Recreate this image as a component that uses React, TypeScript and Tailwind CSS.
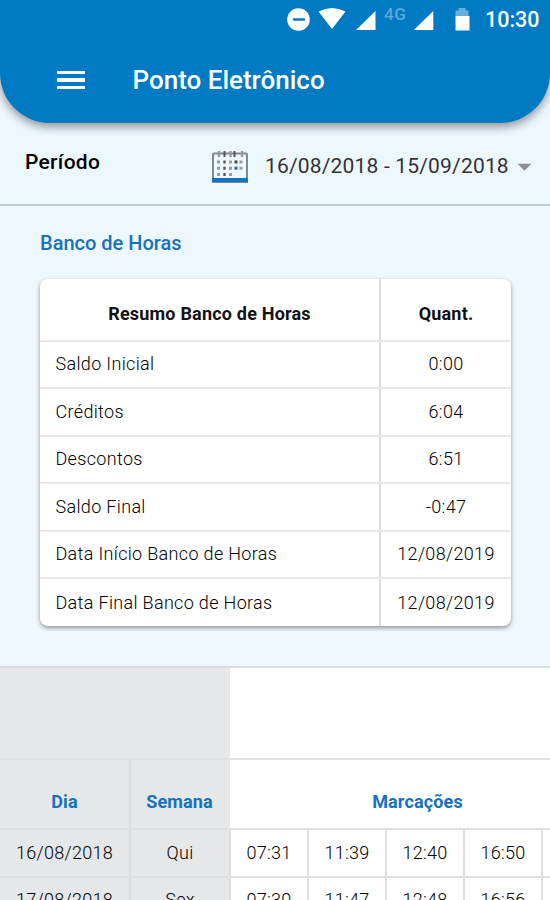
import { MdArrowDropDown } from 'react-icons/md';

const summary = [
  { label: 'Saldo Inicial', value: '0:00' },
  { label: 'Créditos', value: '6:04' },
  { label: 'Descontos', value: '6:51' },
  { label: 'Saldo Final', value: '-0:47' },
  { label: 'Data Início Banco de Horas', value: '12/08/2019' },
  { label: 'Data Final Banco de Horas', value: '12/08/2019' },
];

const days = [
  { date: '16/08/2018', weekday: 'Qui', marks: ['07:31', '11:39', '12:40', '16:50'] },
  { date: '17/08/2018', weekday: 'Sex', marks: ['07:30', '11:47', '12:48', '16:56'] },
];

function StatusBar() {
  return (
    <div className="flex h-10 items-center pl-[286px] text-white">
      <svg className="h-10 w-[190px] shrink-0" viewBox="286 0 190 40" fill="currentColor">
        <circle cx="298.5" cy="19.5" r="11.3" />
        <path d="M294 19.5h10" stroke="#007ac2" strokeWidth="2.4" strokeLinecap="round" />
        <path d="M318.5 11.5Q332 4.5 345.5 11.5L332 29z" />
        <path d="M375.5 11V30H356z" />
        <path d="M433.3 11V30H413.8z" />
        <path d="M455.5 16V10.5h3V8h7v2.5h3V16z" opacity=".4" />
        <path d="M455.5 16h14v14.5h-14z" />
        <text x="384" y="20" fontSize="17" fontWeight="500" letterSpacing="0.5" opacity=".35" fontFamily="Roboto">4G</text>
      </svg>
      <span className="pl-[9px] text-[21.5px] font-medium leading-10">10:30</span>
    </div>
  );
}

function Header() {
  return (
    <header className="relative z-10 h-[123px] shrink-0 rounded-b-[50px] bg-[#007ac2] shadow-[0_4px_10px_rgba(0,0,0,0.4)]">
      <StatusBar />
      <div className="flex h-20 items-center pl-[57px] text-white">
        <div className="flex w-7 flex-col gap-1">
          <span className="h-[3.5px] bg-white" />
          <span className="h-[3.5px] bg-white" />
          <span className="h-[3.5px] bg-white" />
        </div>
        <h1 className="pl-[47.5px] text-[26px] font-medium leading-none">Ponto Eletrônico</h1>
      </div>
    </header>
  );
}

function CalendarIcon() {
  return (
    <svg className="mt-1.5 h-[34px] w-[38px] shrink-0" viewBox="0 0 38 34" fill="none">
      <path d="M2 28V4.5q0-1 1-1h32q1 0 1 1V28" stroke="#85898c" strokeWidth="2" />
      <path d="M1 28h36v4H1z" fill="#1672bd" />
      <path d="M1 32.500h36" stroke="#7c858c" strokeWidth="1" />
      <path d="M8 1v6M19.5 1v6M31 1v6" stroke="#96999b" strokeWidth="2.4" />
      <path d="M13.5 1v6M23.5 1v6" stroke="#55595c" strokeWidth="2" />
      <path d="M7.5 10.5v16M19.5 10.5v16M30 10.5v9.5" stroke="#999c9e" strokeWidth="3" strokeDasharray="3 3.2" />
      <path d="M13.5 10.5v16" stroke="#55595c" strokeWidth="2.4" strokeDasharray="3 3.2" />
      <path d="M25 10.5v3" stroke="#44484b" strokeWidth="3" />
      <path d="M25 16.7v3" stroke="#1672bd" strokeWidth="3" />
    </svg>
  );
}

export default function App() {
  return (
    <div className="flex h-[900px] w-[550px] flex-col overflow-hidden bg-[#edf7fe] font-[Roboto,sans-serif] text-[#222]">
      <Header />

      <div className="flex h-[83px] shrink-0 items-center border-b-2 border-[#c3cbcf] pl-[25px]">
        <span className="w-[186px] shrink-0 pb-0.5 text-[21px] font-medium tracking-[0.3px] text-black">Período</span>
        <CalendarIcon />
        <span className="w-[260px] shrink-0 whitespace-nowrap pl-4 pt-1.5 text-[21px] font-normal tracking-[0.18px] text-[#333]">16/08/2018 - 15/09/2018</span>
        <MdArrowDropDown className="mt-1.5 size-[33px] shrink-0 -ml-px text-[#8b8f92]" />
      </div>

      <section className="h-[462px] shrink-0 border-b-2 border-[#d8dee1] px-10 pt-[22px]">
        <h2 className="h-[51px] text-xl font-medium leading-[30px] text-[#1672bd]">Banco de Horas</h2>
        <div className="mr-[-1px] overflow-hidden rounded-lg bg-white shadow-[0_2px_4px_rgba(0,0,0,0.4)]">
          <div className="flex h-[62.5px] border-b-2 border-[#e8e9ea] text-lg font-bold tracking-[0.2px] text-[#111]">
            <div className="flex w-[341px] items-center justify-center border-r-2 border-[#dcdddd] pt-2.5">Resumo Banco de Horas</div>
            <div className="flex flex-1 items-center justify-center pt-2.5">Quant.</div>
          </div>
          {summary.map((row) => (
            <div key={row.label} className="flex h-[47.5px] border-b-2 border-[#e8e9ea] text-lg font-light tracking-[0.33px] text-black last:h-[47px] last:border-b-0">
              <div className="flex w-[341px] items-center border-r-2 border-[#dcdddd] pl-[15.5px]">{row.label}</div>
              <div className="flex flex-1 items-center justify-center">{row.value}</div>
            </div>
          ))}
        </div>
      </section>

      <section className="flex-1 bg-white">
        <div className="flex h-[92px] border-b-2 border-[#dfe0e1]">
          <div className="w-[230px] bg-[#e6e7e8]" />
        </div>
        <div className="flex h-[70px] border-b-2 border-[#dfe0e1] text-lg font-bold tracking-[0.15px] text-[#1672bd]">
          <div className="flex w-[131px] shrink-0 items-center justify-center border-r-2 border-[#dbdcdd] bg-[#e6e7e8] pt-4">Dia</div>
          <div className="flex w-[99px] shrink-0 items-center justify-center bg-[#e6e7e8] pr-0.5 pt-4">Semana</div>
          <div className="flex w-[375px] shrink-0 items-center justify-center pt-4">Marcações</div>
        </div>
        {days.map((day) => (
          <div key={day.date} className="flex h-[47.5px] border-b-2 border-[#dfe0e1] text-lg font-light tracking-[0.3px] text-black">
            <div className="flex w-[131px] shrink-0 items-center justify-center border-r-2 border-[#dbdcdd] bg-[#e6e7e8]">{day.date}</div>
            <div className="flex w-[100px] shrink-0 items-center justify-center border-r-2 border-[#dbdcdd] bg-[#e6e7e8]">{day.weekday}</div>
            {day.marks.map((mark) => (
              <div key={mark} className="flex w-[78px] shrink-0 items-center justify-center border-r-2 border-[#dfe0e1]">{mark}</div>
            ))}
          </div>
        ))}
      </section>
    </div>
  );
}
